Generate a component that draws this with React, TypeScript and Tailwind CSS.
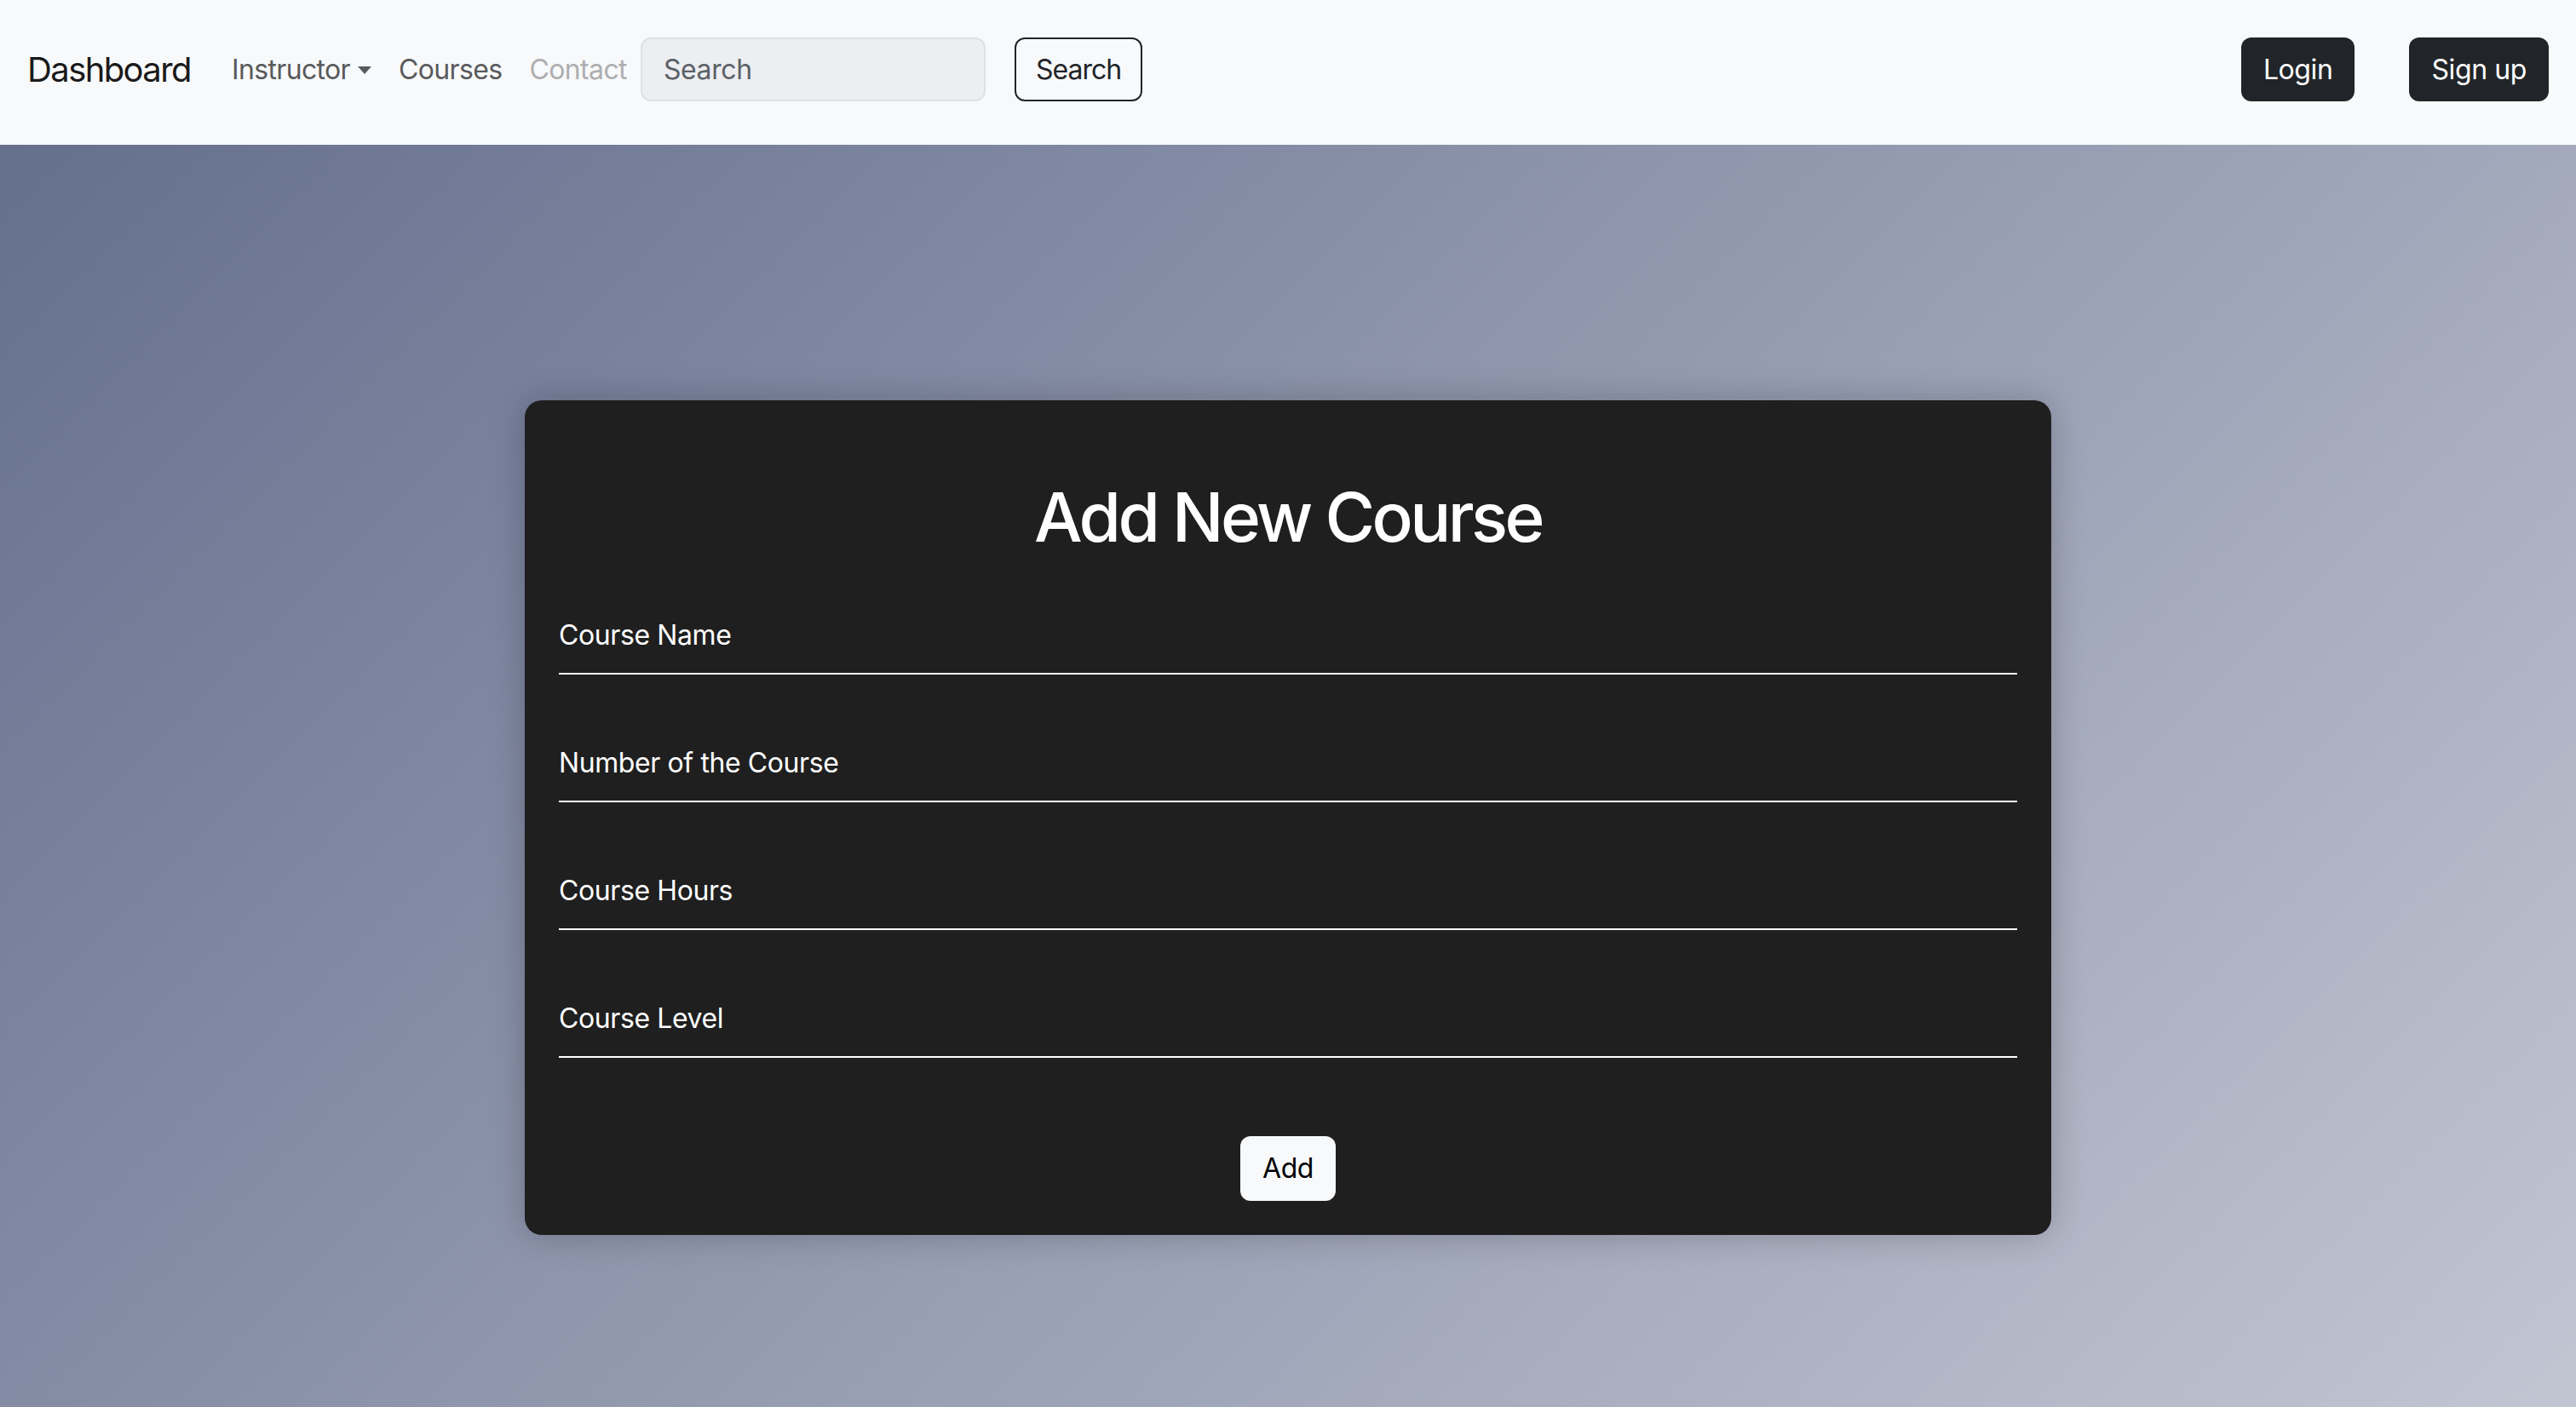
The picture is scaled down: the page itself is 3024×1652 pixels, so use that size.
import React from 'react';

const font = { fontFamily: 'Inter, "Liberation Sans", sans-serif' };

// Felder im Formular
const fields = ['Course Name', 'Number of the Course', 'Course Hours', 'Course Level'];

const Navbar = () => (
  <nav className="flex h-[170px] items-center bg-[#f8f9fa] px-[32px] pb-[7px]">
    <a className="mr-[32px] text-[40px] leading-[60px] tracking-[-0.04em] text-[#1a1a1a]">Dashboard</a>
    <ul className="flex items-center text-[32px] leading-[48px] tracking-[-0.02em]">
      <li className="flex items-center px-[16px] text-[#595a5c]">
        Instructor
        <span className="ml-[9px] mt-[2px] h-0 w-0 border-x-[8px] border-t-[9px] border-x-transparent border-t-[#595a5c]" />
      </li>
      <li className="px-[16px] text-[#595a5c]">Courses</li>
      <li className="px-[16px] text-[#adaeb0]">Contact</li>
    </ul>
    <div className="flex h-[75px] w-[405px] items-center rounded-[12px] border-2 border-[#dfe1e5] bg-[#eceef1] px-[25px] text-[32px] text-[#5c6166]">
      Search
    </div>
    <button className="ml-[34px] h-[75px] rounded-[12px] border-2 border-[#212529] px-[23px] text-[32px] tracking-[-0.03em] text-[#212529]">
      Search
    </button>
    <div className="ml-auto flex items-center gap-[64px]">
      <button className="h-[75px] rounded-[12px] bg-[#212529] px-[26px] text-[32px] text-white">Login</button>
      <button className="h-[75px] rounded-[12px] bg-[#212529] px-[26px] text-[32px] text-white">Sign up</button>
    </div>
  </nav>
);

export default function App() {
  return (
    <div style={font} className="flex min-h-[1652px] flex-col tracking-[-0.025em]">
      <Navbar />
      <main className="flex flex-1 justify-center bg-[linear-gradient(135deg,#65708e,#c2c5d2)] pt-[300px]">
        <div className="h-fit w-[1792px] rounded-[20px] bg-[#1f1f1f] p-[40px] shadow-[0_0_40px_rgba(0,0,0,0.22)]">
          <h1 className="mt-[49px] mb-[67px] text-center text-[80px] font-medium leading-[96px] tracking-[-0.045em] text-white">
            Add New Course
          </h1>
          <div className="flex flex-col gap-[80px]">
            {fields.map((f) => (
              <div key={f} className="border-b-2 border-white pb-[20px]">
                <div className="text-[32px] leading-[48px] text-white">{f}</div>
              </div>
            ))}
          </div>
          <div className="mt-[92px] flex justify-center">
            <button className="h-[76px] rounded-[12px] bg-[#f8f9fa] px-[26px] text-[32px] text-black">Add</button>
          </div>
        </div>
      </main>
    </div>
  );
}
